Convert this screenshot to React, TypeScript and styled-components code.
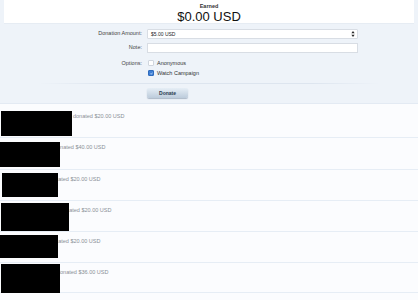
import React from "react";
import styled, { createGlobalStyle } from "styled-components";

const Global = createGlobalStyle`
  html, body { margin: 0; padding: 0; background: #fbfcfe; }
  body { font-family: "Liberation Sans", Arial, sans-serif; }
`;

const Page = styled.div`
  width: 418px;
  height: 300px;
  overflow: hidden;
  background: #fbfcfe;
`;

const Panel = styled.section`
  background: #eef3f9;
  height: 104px;
  border-bottom: 1px solid #e3eaf3;
  box-sizing: border-box;
`;

const EarnedCard = styled.div`
  margin: 0 4px;
  height: 24px;
  background: #ffffff;
  display: flex;
  flex-direction: column;
  align-items: center;
  padding-top: 3px;
  box-sizing: border-box;
  border-bottom: 1px solid #e6ecf3;
`;

const EarnedLabel = styled.div`
  font-size: 5.5px;
  font-weight: bold;
  color: #333;
  line-height: 7px;
`;

const EarnedValue = styled.div`
  font-size: 13px;
  color: #111;
  line-height: 13px;
`;

const Form = styled.div`
  display: grid;
  grid-template-columns: 142px 210px;
  column-gap: 6px;
  padding-top: 5px;
`;

const Label = styled.div<{ $h: number; $mt?: number }>`
  text-align: right;
  font-size: 5.5px;
  color: #444;
  height: ${(p) => p.$h}px;
  margin-top: ${(p) => p.$mt ?? 0}px;
  line-height: ${(p) => p.$h}px;
`;

const Cell = styled.div<{ $h: number; $mt?: number }>`
  height: ${(p) => p.$h}px;
  margin-top: ${(p) => p.$mt ?? 0}px;
  display: flex;
  align-items: center;
`;

const Select = styled.div`
  width: 100%;
  height: 8px;
  background: #fff;
  border: 1px solid #d8dde4;
  border-radius: 1px;
  font-size: 5px;
  color: #222;
  line-height: 8px;
  padding-left: 3px;
  display: flex;
  align-items: center;
  justify-content: space-between;
  margin-left: -1px;
`;

const Arrows = styled.svg`
  width: 4px;
  height: 6px;
  margin-right: 2px;
`;

const Input = styled.div`
  width: 100%;
  height: 8px;
  background: #fff;
  border: 1px solid #d8dde4;
  margin-left: -1px;
`;

const Check = styled.span<{ $on?: boolean }>`
  width: 4px;
  height: 4px;
  border-radius: 1px;
  background: ${(p) => (p.$on ? "#3d7fd6" : "#fff")};
  border: 0.5px solid ${(p) => (p.$on ? "#2f6bbd" : "#d0d6de")};
  display: inline-flex;
  align-items: center;
  justify-content: center;
  margin-right: 3px;
  flex: none;
`;

const OptionText = styled.span`
  font-size: 5.5px;
  color: #333;
`;

const Divider = styled.div`
  grid-column: 1 / -1;
  height: 1px;
  margin: 6px 0 0 38px;
  background: linear-gradient(to right, rgba(220,228,238,0), #dde5ef 20%, #dde5ef 80%, rgba(220,228,238,0));
  width: 342px;
`;

const DonateButton = styled.button`
  width: 41px;
  height: 10px;
  padding: 0;
  border: none;
  border-radius: 2px;
  background: linear-gradient(#e6eef6, #bccbdb);
  box-shadow: 0 1px 1px rgba(90, 110, 140, 0.45);
  font-family: "Liberation Sans", Arial, sans-serif;
  font-size: 5px;
  font-weight: bold;
  color: #2a3a4e;
  margin-left: -1px;
`;

const List = styled.div`
  display: flex;
  flex-direction: column;
`;

const Row = styled.div<{ $h: number }>`
  position: relative;
  height: ${(p) => p.$h}px;
  border-bottom: 1px solid #e6edf5;
  box-sizing: border-box;
  display: flex;
  align-items: flex-start;
  background: #fbfcfe;
`;

const Lead = styled.div`
  flex: none;
`;

const Message = styled.span`
  font-size: 5.5px;
  color: #8a8f96;
  white-space: nowrap;
`;

const Redaction = styled.div`
  position: absolute;
  background: #000;
`;

type Donation = {
  amount: string;
  h: number;
  textX: number;
  textY: number;
  box: { x: number; y: number; w: number; h: number };
};

const donations: Donation[] = [
  { amount: "$20.00", h: 34, textX: 73, textY: 9, box: { x: 1, y: 7, w: 71, h: 25 } },
  { amount: "$40.00", h: 32, textX: 54, textY: 6, box: { x: 0, y: 4, w: 60, h: 25 } },
  { amount: "$20.00", h: 31, textX: 49, textY: 6, box: { x: 2, y: 3, w: 56, h: 24 } },
  { amount: "$20.00", h: 31, textX: 60, textY: 6, box: { x: 1, y: 2, w: 68, h: 28 } },
  { amount: "$20.00", h: 31, textX: 49, textY: 6, box: { x: 0, y: 3, w: 58, h: 23 } },
  { amount: "$36.00", h: 30, textX: 57, textY: 6, box: { x: 1, y: 1, w: 59, h: 29 } },
];

export default function App() {
  return (
    <Page>
      <Global />
      <Panel>
        <EarnedCard>
          <EarnedLabel>Earned</EarnedLabel>
          <EarnedValue>$0.00 USD</EarnedValue>
        </EarnedCard>
        <Form>
          <Label $h={9}>Donation Amount:</Label>
          <Cell $h={9}>
            <Select>
              <span>$5.00 USD</span>
              <Arrows viewBox="0 0 4 6">
                <path d="M2 0 L3.6 2.3 L0.4 2.3 Z" fill="#222" />
                <path d="M2 6 L3.6 3.7 L0.4 3.7 Z" fill="#222" />
              </Arrows>
            </Select>
          </Cell>
          <Label $h={9} $mt={5}>Note:</Label>
          <Cell $h={9} $mt={5}>
            <Input />
          </Cell>
          <Label $h={8} $mt={7}>Options:</Label>
          <Cell $h={8} $mt={7}>
            <Check />
            <OptionText>Anonymous</OptionText>
          </Cell>
          <div />
          <Cell $h={8} $mt={2}>
            <Check $on>
              <svg width="3" height="3" viewBox="0 0 3 3">
                <path d="M0.4 1.5 L1.2 2.3 L2.6 0.6" stroke="#fff" strokeWidth="0.6" fill="none" />
              </svg>
            </Check>
            <OptionText>Watch Campaign</OptionText>
          </Cell>
          <Divider />
          <div />
          <Cell $h={11} $mt={3}>
            <DonateButton>Donate</DonateButton>
          </Cell>
        </Form>
      </Panel>
      <List>
        {donations.map((d, i) => (
          <Row key={i} $h={d.h}>
            <Lead style={{ width: d.textX }} />
            <Message style={{ marginTop: d.textY }}>donated {d.amount} USD</Message>
            <Redaction
              style={{ left: d.box.x, top: d.box.y, width: d.box.w, height: d.box.h }}
            />
          </Row>
        ))}
      </List>
    </Page>
  );
}
